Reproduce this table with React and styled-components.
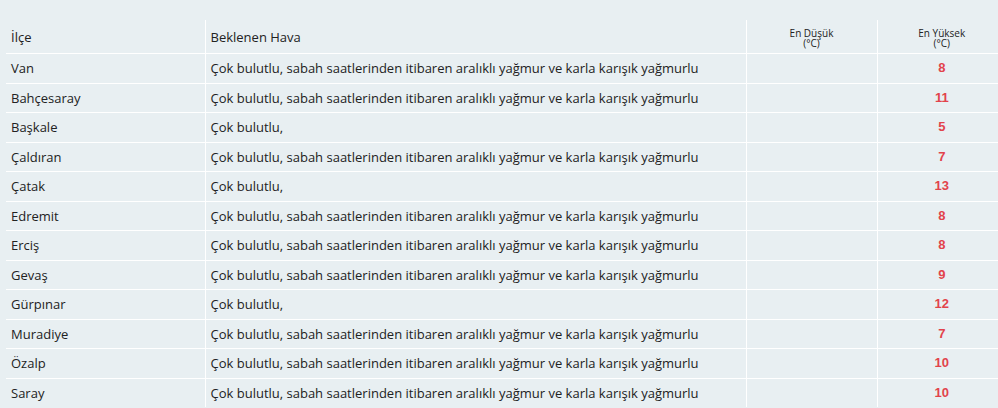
import React from "react";
import styled, { createGlobalStyle } from "styled-components";

const GlobalStyle = createGlobalStyle`
  html, body {
    margin: 0;
    padding: 0;
    overflow: hidden;
    background-color: #e8eff2;
  }
`;

const rows = [
  ["Van", "Çok bulutlu, sabah saatlerinden itibaren aralıklı yağmur ve karla karışık yağmurlu", 8],
  ["Bahçesaray", "Çok bulutlu, sabah saatlerinden itibaren aralıklı yağmur ve karla karışık yağmurlu", 11],
  ["Başkale", "Çok bulutlu,", 5],
  ["Çaldıran", "Çok bulutlu, sabah saatlerinden itibaren aralıklı yağmur ve karla karışık yağmurlu", 7],
  ["Çatak", "Çok bulutlu,", 13],
  ["Edremit", "Çok bulutlu, sabah saatlerinden itibaren aralıklı yağmur ve karla karışık yağmurlu", 8],
  ["Erciş", "Çok bulutlu, sabah saatlerinden itibaren aralıklı yağmur ve karla karışık yağmurlu", 8],
  ["Gevaş", "Çok bulutlu, sabah saatlerinden itibaren aralıklı yağmur ve karla karışık yağmurlu", 9],
  ["Gürpınar", "Çok bulutlu,", 12],
  ["Muradiye", "Çok bulutlu, sabah saatlerinden itibaren aralıklı yağmur ve karla karışık yağmurlu", 7],
  ["Özalp", "Çok bulutlu, sabah saatlerinden itibaren aralıklı yağmur ve karla karışık yağmurlu", 10],
  ["Saray", "Çok bulutlu, sabah saatlerinden itibaren aralıklı yağmur ve karla karışık yağmurlu", 10],
];

const App = () => {
  return (
    <Page>
      <GlobalStyle />
      <Table>
        <colgroup>
          <col style={{ width: 199 }} />
          <col style={{ width: 541 }} />
          <col style={{ width: 131 }} />
          <col style={{ width: 129 }} />
        </colgroup>
        <thead>
          <tr>
            <HeadCell>İlçe</HeadCell>
            <HeadCell>Beklenen Hava</HeadCell>
            <SmallHead>
              <span>En Düşük</span>
              <span>(°C)</span>
            </SmallHead>
            <SmallHead>
              <span>En Yüksek</span>
              <span>(°C)</span>
            </SmallHead>
          </tr>
        </thead>
        <tbody>
          {rows.map(([name, desc, high]) => (
            <tr key={name}>
              <Cell>{name}</Cell>
              <Cell>{desc}</Cell>
              <Cell></Cell>
              <TempCell>{high}</TempCell>
            </tr>
          ))}
        </tbody>
      </Table>
    </Page>
  );
};

const Page = styled.div`
  padding: 20px 0 0 6px;
  width: 1010px;
`;

const Table = styled.table`
  border-collapse: collapse;
  table-layout: fixed;
  width: 1000px;
  font-family: "Open Sans", "Liberation Sans", sans-serif;
  color: #222;
`;

const HeadCell = styled.th`
  height: 33px;
  padding: 0 5px;
  text-align: left;
  font-weight: normal;
  font-size: 13px;
  line-height: 18px;
  vertical-align: middle;
  border-left: 1px solid #fff;
  border-bottom: 1px solid #fff;
  &:first-child {
    border-left: none;
  }
`;

const SmallHead = styled(HeadCell)`
  height: 28px;
  padding: 4px 5px 1px;
  text-align: center;
  font-size: 10px;
  line-height: 10px;
  span {
    display: block;
    height: 10px;
  }
`;

const Cell = styled.td`
  padding: 5px 5px;
  font-size: 13px;
  line-height: 18.5px;
  white-space: nowrap;
  border-left: 1px solid #fff;
  border-top: 1px solid #fff;
  &:first-child {
    border-left: none;
  }
`;

const TempCell = styled(Cell)`
  text-align: center;
  font-family: "Liberation Sans", Arial, sans-serif;
  font-weight: bold;
  color: #e2434b;
`;

export default App;
